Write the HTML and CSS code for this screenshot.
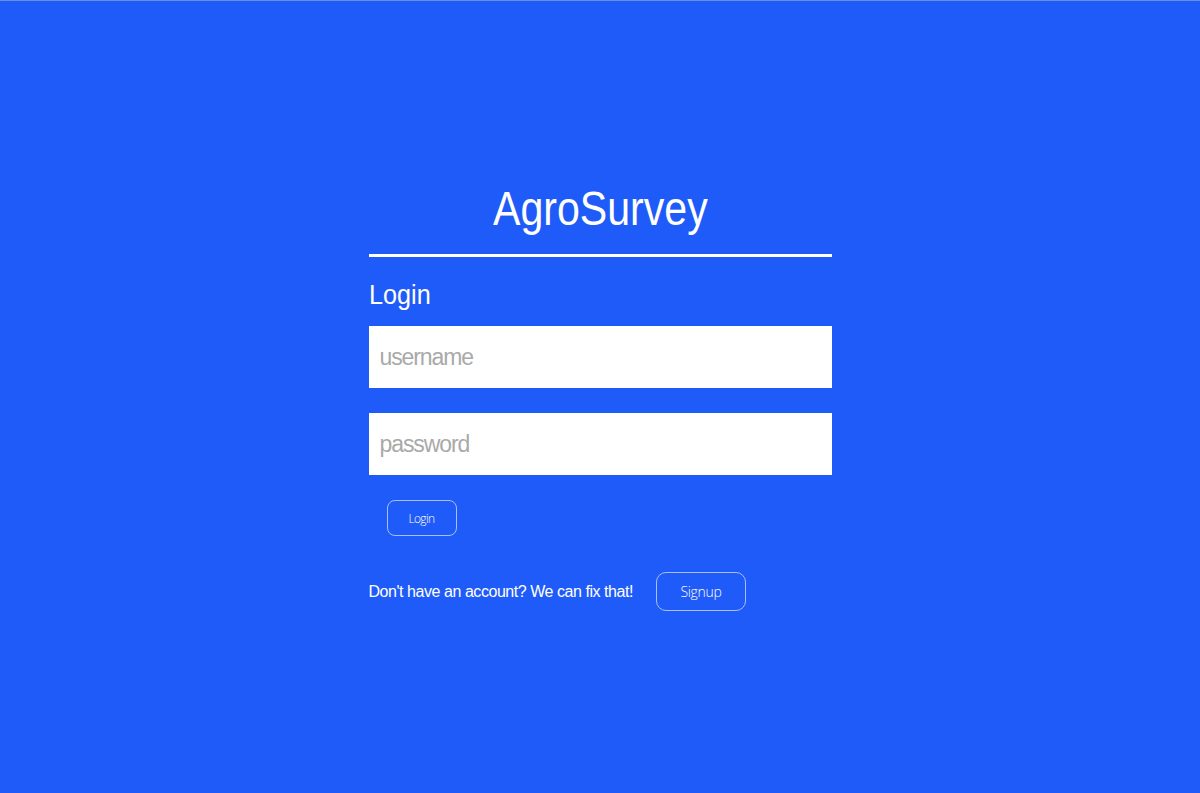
FILE: index.html
```html
<!DOCTYPE html>
<html>
<head>
<meta charset="utf-8">
<link rel="stylesheet" href="styles.css">
</head>
<body>
<div class="topline"></div>
<main class="page">
  <div class="card">
    <h1 class="title"><span class="squeeze">AgroSurvey</span></h1>
    <hr class="rule">
    <h2 class="subtitle"><span class="squeeze-left">Login</span></h2>
    <input class="field" type="text" placeholder="username">
    <input class="field" type="password" placeholder="password">
    <div class="btn-row">
      <button class="btn btn-login">Login</button>
    </div>
    <div class="signup-row">
      <span class="signup-text">Don't have an account? We can fix that!</span>
      <button class="btn btn-signup">Signup</button>
    </div>
  </div>
</main>
</body>
</html>
```

FILE: styles.css
```css
html, body {
  margin: 0;
  padding: 0;
  height: 100%;
  background: #1f5bf8;
  font-family: "Liberation Sans", Arial, sans-serif;
  color: #fff;
}
.topline {
  height: 1px;
  background: #6b8fe0;
}
.page {
  display: flex;
  justify-content: center;
  padding-top: 178px;
}
.card {
  width: 463px;
  display: flex;
  flex-direction: column;
}
.title {
  margin: 0;
  text-align: center;
  font-weight: 400;
  font-size: 48px;
  line-height: 60px;
}
.squeeze {
  display: inline-block;
  transform: scaleX(0.856);
  transform-origin: center;
}
.squeeze-left {
  display: inline-block;
  transform: scaleX(0.9);
  transform-origin: left center;
}
.rule {
  margin: 15px 0 0 0;
  border: 0;
  height: 3px;
  background: #fff;
}
.subtitle {
  margin: 21px 0 0 0;
  font-weight: 400;
  font-size: 28px;
  line-height: 34px;
}
.field {
  margin: 14px 0 11px 0;
  height: 62px;
  box-sizing: border-box;
  border: 0;
  padding: 0 11px;
  font-family: "Liberation Sans", Arial, sans-serif;
  font-size: 23px;
  letter-spacing: -1.1px;
  background: #fff;
  outline: none;
}
.field + .field {
  margin-top: 14px;
}
.field::placeholder {
  color: #a9a9a9;
}
.btn-row {
  padding: 14px 0 0 18px;
}
.btn {
  background: transparent;
  color: #fff;
  border: 1px solid #a9bff5;
  font-family: "Open Sans", sans-serif;
  font-weight: 300;
  cursor: pointer;
}
.btn-login {
  width: 70px;
  height: 36px;
  border-radius: 8px;
  font-size: 12px;
  letter-spacing: -0.6px;
}
.signup-row {
  display: flex;
  align-items: center;
  margin-top: 36px;
  gap: 23px;
}
.signup-text {
  font-size: 16px;
  letter-spacing: -0.45px;
}
.btn-signup {
  width: 90px;
  height: 39px;
  border-radius: 10px;
  font-size: 14px;
  letter-spacing: -0.3px;
}
```
